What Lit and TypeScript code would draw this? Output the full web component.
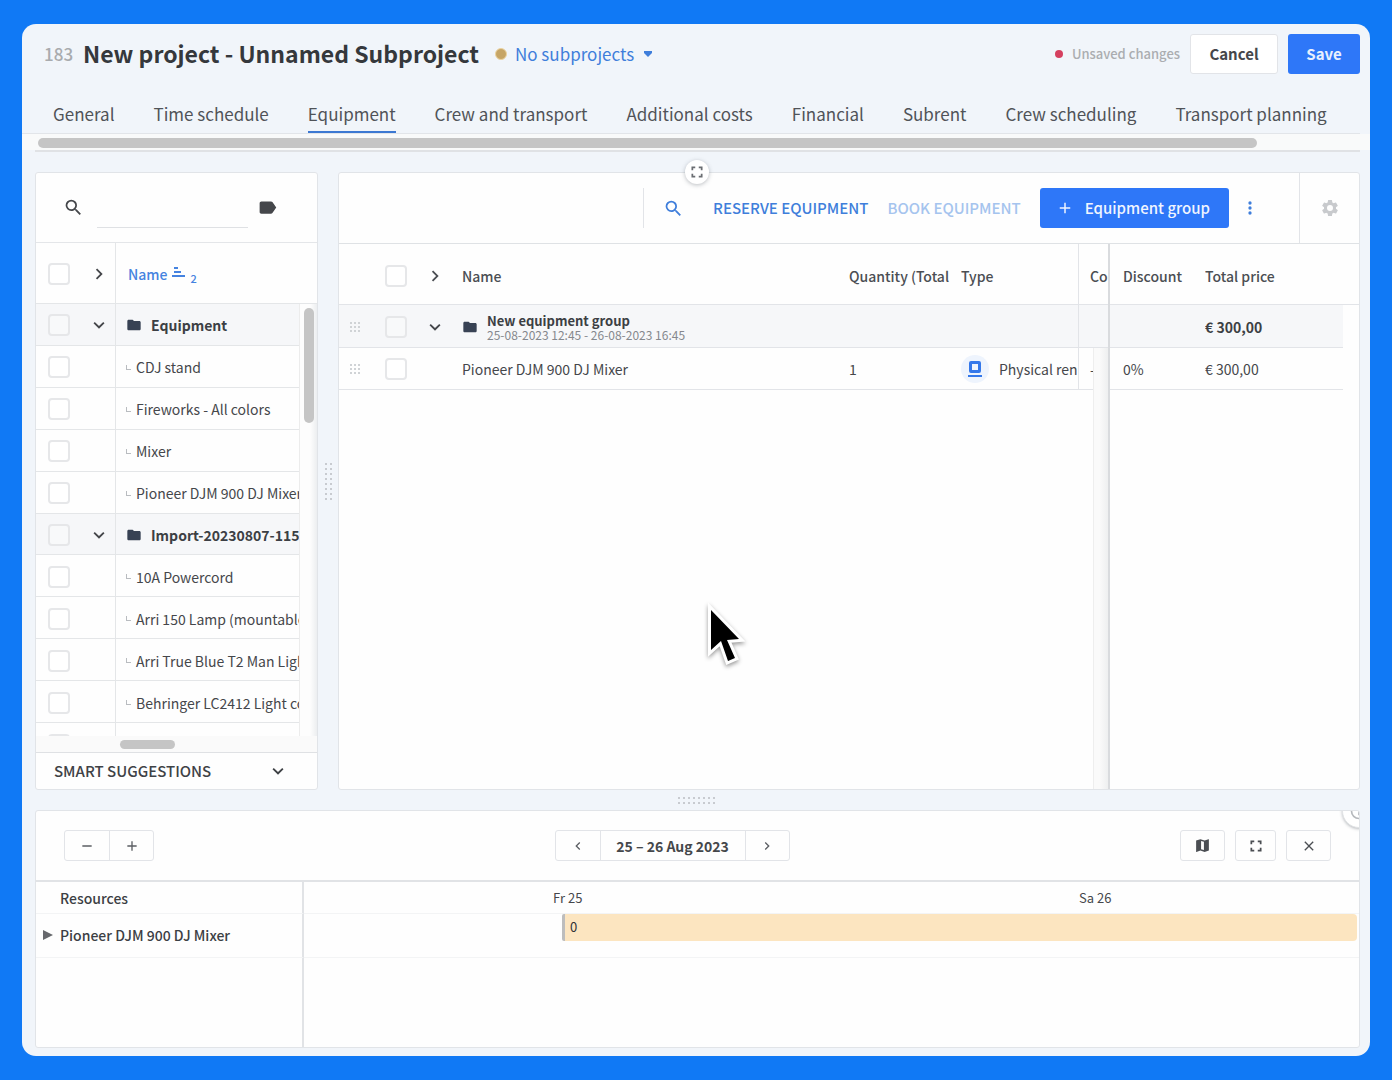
import { LitElement, html, css, svg, nothing } from "lit";
import { customElement, state } from "lit/decorators.js";
import { classMap } from "lit/directives/class-map.js";

interface ListRow {
  label: string;
  group?: boolean;
}

const TABS = [
  "General",
  "Time schedule",
  "Equipment",
  "Crew and transport",
  "Additional costs",
  "Financial",
  "Subrent",
  "Crew scheduling",
  "Transport planning",
];

const LIST: ListRow[] = [
  { label: "Equipment", group: true },
  { label: "CDJ stand" },
  { label: "Fireworks - All colors" },
  { label: "Mixer" },
  { label: "Pioneer DJM 900 DJ Mixer" },
  { label: "Import-20230807-115", group: true },
  { label: "10A Powercord" },
  { label: "Arri 150 Lamp (mountable" },
  { label: "Arri True Blue T2 Man Ligh" },
  { label: "Behringer LC2412 Light co" },
  { label: "" },
];

const icon = (size: number, body: unknown, box = 24) =>
  html`<svg width=${size} height=${size} viewBox="0 0 ${box} ${box}" fill="currentColor" aria-hidden="true">${body}</svg>`;

const SEARCH = svg`<path d="M15.5 14h-.79l-.28-.27A6.47 6.47 0 0 0 16 9.5 6.5 6.5 0 1 0 9.5 16c1.61 0 3.09-.59 4.23-1.57l.27.28v.79l5 4.99L20.49 19l-4.99-5zm-6 0C7.01 14 5 11.99 5 9.5S7.01 5 9.5 5 14 7.01 14 9.5 11.99 14 9.5 14z"/>`;
const TAG = svg`<path d="M17.63 5.84C17.27 5.33 16.67 5 16 5H5c-1.1 0-2 .9-2 2v10c0 1.1.9 2 2 2h11c.67 0 1.27-.33 1.63-.84L22 12l-4.37-6.16z"/>`;
const FOLDER = svg`<path d="M10 4H4c-1.1 0-2 .9-2 2v12c0 1.1.9 2 2 2h16c1.1 0 2-.9 2-2V8c0-1.1-.9-2-2-2h-8l-2-2z"/>`;
const RIGHT = svg`<path d="M8.6 16.6 13.2 12 8.6 7.4 10 6l6 6-6 6z"/>`;
const LEFT = svg`<path d="M15.4 7.4 10.8 12l4.6 4.6L14 18l-6-6 6-6z"/>`;
const DOWN = svg`<path d="M7.4 8.6 12 13.2l4.6-4.6L18 10l-6 6-6-6z"/>`;
const PLUS = svg`<path d="M19 13h-6v6h-2v-6H5v-2h6V5h2v6h6v2z"/>`;
const MINUS = svg`<path d="M19 13H5v-2h14v2z"/>`;
const DOTS = svg`<path d="M12 8a2 2 0 1 0 0-4 2 2 0 0 0 0 4zm0 2a2 2 0 1 0 0 4 2 2 0 0 0 0-4zm0 6a2 2 0 1 0 0 4 2 2 0 0 0 0-4z"/>`;
const GEAR = svg`<path d="M19.14 12.94c.04-.3.06-.61.06-.94 0-.32-.02-.64-.07-.94l2.03-1.58a.49.49 0 0 0 .12-.61l-1.92-3.32a.49.49 0 0 0-.59-.22l-2.39.96a7.03 7.03 0 0 0-1.62-.94l-.36-2.54a.48.48 0 0 0-.48-.41h-3.84a.48.48 0 0 0-.47.41l-.36 2.54c-.59.24-1.13.57-1.62.94l-2.39-.96a.49.49 0 0 0-.59.22L2.74 8.87a.48.48 0 0 0 .12.61l2.03 1.58c-.05.3-.09.63-.09.94s.02.64.07.94l-2.03 1.58a.49.49 0 0 0-.12.61l1.92 3.32c.12.22.37.29.59.22l2.39-.96c.5.38 1.03.7 1.62.94l.36 2.54c.05.24.24.41.48.41h3.84c.24 0 .44-.17.47-.41l.36-2.54c.59-.24 1.13-.56 1.62-.94l2.39.96c.22.08.47 0 .59-.22l1.92-3.32a.48.48 0 0 0-.12-.61l-2.01-1.58zM12 15.6A3.6 3.6 0 1 1 12 8.4a3.6 3.6 0 0 1 0 7.2z"/>`;
const MAP = svg`<path fill-rule="evenodd" d="M20.500 3 15 5 9 3 3 5v16l.5.200L9 19l6 2 6-2V3.200zM14 18.500l-4-1.300V5.500l4 1.300z"/>`;
const CLOSE = svg`<path d="M19 6.410 17.590 5 12 10.590 6.410 5 5 6.410 10.590 12 5 17.590 6.410 19 12 13.410 17.590 19 19 17.590 13.410 12z"/>`;
const FULL = svg`<path fill="none" stroke="currentColor" stroke-width="3" d="M4 9V4h5M15 4h5v5M20 15v5h-5M9 20H4v-5"/>`;
const RING = svg`<circle cx="12" cy="12" r="9" fill="none" stroke="currentColor" stroke-width="2"/><path d="M11 11h2v6h-2z"/>`;
const SORT = svg`<path d="M2 0h4v2H2zM2 4h7v2H2zM0 8h13v2H0z"/>`;

const grip = (cols: number, rows: number, step: number) => {
  const dots = [];
  for (let y = 0; y < rows; y++)
    for (let x = 0; x < cols; x++)
      dots.push(svg`<rect x=${x * step} y=${y * step} width="2" height="2"/>`);
  return html`<svg width=${(cols - 1) * step + 2} height=${(rows - 1) * step + 2} fill="currentColor" aria-hidden="true">${dots}</svg>`;
};

@customElement("app-root")
export class AppRoot extends LitElement {
  @state() private tab = "Equipment";

  static styles = css`
    :host {
      display: flex;
      box-sizing: border-box;
      height: 100vh;
      padding: 24px 22px;
      background: #1079f5;
      color: #45474b;
      font: 400 14px/20px "Noto Sans CJK SC", "Noto Sans", sans-serif;
    }
    *, *::before, *::after { box-sizing: border-box; }
    svg { display: block; flex: none; }
    button { font: inherit; color: inherit; background: none; border: 0; padding: 0; margin: 0; cursor: pointer; display: flex; align-items: center; justify-content: center; }
    input { font: inherit; margin: 0; padding: 0; }
    table { border-collapse: separate; border-spacing: 0; table-layout: fixed; width: 100%; }
    th, td { padding: 0; text-align: left; white-space: nowrap; overflow: hidden; font-weight: 400; }

    .window { flex: 1; min-width: 0; display: flex; flex-direction: column; background: #f1f5fa; border-radius: 14px; padding-bottom: 8px; overflow: hidden; }

    .header { display: flex; align-items: center; padding: 10px 10px 20px 22px; }
    .number { width: 39px; font-size: 17px; font-weight: 500; color: #a9abae; }
    .title { margin: 0; font-size: 23px; line-height: 38px; padding-bottom: 2px; font-weight: 700; color: #35383c; }
    .dot { border-radius: 50%; }
    .gold { width: 12px; height: 12px; margin: 0 8px 0 16px; background: #c6a566; border: 1px solid #ecd3a0; }
    .sub { gap: 9px; font-size: 17px; color: #3f7edb; }
    .status { display: flex; align-items: center; gap: 9px; margin-left: auto; margin-right: 10px; font-size: 13px; font-weight: 500; color: #abadb0; }
    .red { width: 8px; height: 8px; background: #d5405f; }
    .cancel, .save { height: 40px; font-size: 15px; font-weight: 700; border-radius: 3px; }
    .cancel { width: 88px; background: #fff; border: 1px solid #e2e4e8; margin-right: 10px; color: #45474b; }
    .save { width: 72px; background: #2e77f8; color: #e8f0fe; }

    .tabs { display: flex; gap: 39px; padding: 0 31px; margin: 0 10px 0 0; border-bottom: 1px solid #e2e5e9; white-space: nowrap; }
    .tab { padding: 8px 0 5px; font-size: 17px; line-height: 24px; color: #505358; border-bottom: 2px solid transparent; text-decoration: none; }
    .tab.on { border-color: #3c78d2; }
    .track { height: 16px; padding: 4px 7px 2px 16px; background: #f9fafa; }
    .thumb { background: #c5c5c5; border-radius: 5px; }
    .track .thumb { width: 92%; height: 10px; }
    .rule { height: 2px; margin: 0 10px 0 13px; background: #e0e2e5; }

    .main { flex: 1; min-height: 0; display: flex; padding: 20px 10px 0 13px; }
    .panel { background: #fefefe; border: 1px solid #e1e4e8; border-radius: 3px; }
    .side { width: 283px; display: flex; flex-direction: column; }
    .splitter { width: 20px; display: flex; align-items: center; justify-content: center; color: #c8cbd0; }
    .splitter.row { width: auto; height: 20px; }

    .filter { display: flex; align-items: center; height: 70px; padding: 0 39px 0 27px; border-bottom: 1px solid #e4e6e9; }
    .filter .field { flex: 1; min-width: 0; height: 40px; margin: 0 9px 0 13px; border: 0; border-bottom: 1px solid #dfe1e4; background: none; outline: none; }
    .scroller { flex: 1; min-height: 0; overflow: hidden; }
    .list { height: 522px; }
    .list thead th { height: 61px; }
    .list th, .list td { border-bottom: 1px solid #e4e6e8; padding-top: 2px; }
    .list .c1 { width: 52px; padding-left: 12px; }
    .list .c2 { width: 27px; }
    .list .c3 { border-left: 1px solid #e4e6e8; padding-left: 10px; }
    .list .gutter { width: 18px; padding: 4px; vertical-align: top; background: linear-gradient(90deg, #fdfdfd 60%, #eceef0); border: 0; border-left: 1px solid #ececec; }
    .list .gap { width: 18px; }
    .gutter .thumb { width: 10px; height: 115px; }
    .shade { background: #f6f7f9; }
    .line { display: flex; align-items: center; }
    .sort { font-weight: 500; color: #4583e0; gap: 5px; padding-left: 2px; }
    .level { font-size: 11px; align-self: flex-end; line-height: 12px; }
    .folder { color: #384254; margin-right: 9px; }
    .strong { font-weight: 700; color: #3c3f44; }
    .branch { flex: none; width: 5px; height: 5px; margin-right: 5px; border: solid #b9bcc0; border-width: 0 0 1px 1px; }
    .hbar { height: 16px; padding: 4px 0 0 84px; background: #fafafa; }
    .hbar .thumb { width: 55px; height: 9px; }
    .smart { justify-content: space-between; height: 37px; padding: 0 28px 0 18px; border-top: 1px solid #dfe1e4; font-size: 15px; font-weight: 500; color: #3f4246; }
    .check { appearance: none; display: block; width: 22px; height: 22px; background: #fff; border: 2px solid #e6e7e9; border-radius: 4px; }
    .shade .check { background: #f8f9fa; }

    .work { flex: 1; min-width: 0; position: relative; display: flex; flex-direction: column; }
    .round { position: absolute; left: 346px; top: -13px; width: 24px; height: 24px; border-radius: 50%; background: #fff; box-shadow: 0 1px 4px rgba(60, 70, 80, 0.35); color: #6b6e73; }
    .bar { display: flex; align-items: center; justify-content: flex-end; height: 71px; border-bottom: 1px solid #dfe2e5; font-size: 15px; font-weight: 500; }
    .find { height: 40px; padding: 0 29px 0 19px; border-left: 1px solid #e2e4e8; color: #3f7edb; }
    .action { color: #3f7edb; margin-right: 19px; }
    .action:disabled { color: #a5c4ee; }
    .primary { height: 40px; gap: 11px; padding: 0 19px 0 16px; border-radius: 3px; background: #2e77f8; color: #f0f5ff; }
    .more { padding: 0 39px 0 11px; color: #3f7edb; }
    .gear { width: 60px; height: 70px; border-left: 1px solid #e2e4e8; color: #c8cacd; }
    .panes { flex: 1; min-height: 0; display: flex; }
    .pane { display: flex; flex-direction: column; }
    .wide { flex: 1; min-width: 0; border-right: 2px solid #d9dbde; }
    .fixed { width: 249px; }
    .grid thead th { height: 61px; padding-top: 3px; font-weight: 500; color: #4b4e53; }
    .grid .group td { height: 43px; padding-top: 2px; }
    .grid .item td { height: 42px; }
    .grid th, .grid .group td, .grid .item td { border-bottom: 1px solid #e2e4e8; }
    .grid .drag { padding-left: 11px; color: #d0d3d6; }
    .w-drag { width: 46px; }
    .w-tick { width: 39px; }
    .w-fold { width: 38px; }
    .w-qty { width: 112px; }
    .w-type { width: 117px; }
    .w-coe { width: 15px; }
    .w-rail { width: 15px; }
    .grid .coe { border-left: 1px solid #e2e4e8; padding-left: 11px; }
    .rail { background: linear-gradient(90deg, #fafafa 40%, #eeeff0); border-left: 1px solid #eeeeee; }
    .grid .item .rail { border-bottom: 0; }
    .rest { flex: 1; display: flex; justify-content: flex-end; }
    .rest .rail { width: 15px; }
    .names { line-height: 15px; font-size: 13px; }
    .dates { font-size: 12px; line-height: 14px; color: #85888d; }
    .badge { flex: none; display: flex; align-items: center; justify-content: center; width: 28px; height: 28px; margin-right: 10px; border-radius: 50%; background: #eef4fd; color: #3478ea; }
    .fixed .disc { width: 95px; padding-left: 13px; }
    .fixed .end { width: 16px; }
    .grid .group .end, .grid .item .end { border: 0; }

    .plan { margin: 0 10px 0 13px; position: relative; overflow: hidden; }
    .corner { position: absolute; right: -17px; top: -17px; width: 34px; height: 34px; border-radius: 50%; background: #fff; border: 1px solid #e2e4e6; box-shadow: 0 1px 3px rgba(60, 70, 80, 0.35); color: #b5b8bc; }
    .tools { display: flex; justify-content: space-between; align-items: center; height: 71px; padding: 0 28px; border-bottom: 2px solid #e1e3e6; }
    .set { display: flex; border: 1px solid #e2e4e8; border-radius: 3px; }
    .dateset { margin-left: 10px; }
    .set button { width: 44px; height: 29px; color: #5b5e63; }
    .set button + button { border-left: 1px solid #e2e4e8; }
    .set .range { width: 145px; font-weight: 700; color: #45474b; }
    .right { display: flex; gap: 10px; }
    .right button { width: 45px; height: 31px; border: 1px solid #e2e4e8; border-radius: 3px; color: #4b4e53; }
    .right .mid { width: 41px; }
    .time th, .time td { border-bottom: 1px solid #f3f4f5; }
    .time thead th { height: 32px; font-size: 13px; text-align: center; }
    .time thead .res, .time .res { width: 268px; padding-left: 24px; border-right: 2px solid #e1e3e6; text-align: left; font-size: 14px; font-weight: 500; color: #3c3f44; }
    .time .row .res { padding: 0 0 2px 7px; }
    .time .row td { height: 44px; vertical-align: top; padding-right: 2px; }
    .time .blank td { height: 89px; border-bottom: 0; }
    .tri { margin-right: 7px; color: #67696d; }
    .booking { height: 27px; padding: 3px 0 0 5px; border-left: 3px solid #bdbdbd; border-radius: 2px 4px 4px 2px; background: #fce5c0; font-size: 13px; color: #303236; }

    .pointer { position: absolute; left: 704px; top: 601px; filter: drop-shadow(0 2px 2px rgba(0, 0, 0, 0.4)); }
  `;

  private check(name: string) {
    return html`<input class="check" type="checkbox" aria-label=${"Select " + name} />`;
  }

  private listRow(row: ListRow, first: boolean) {
    return html`<tr class=${classMap({ shade: !!row.group })}>
      <td class="c1">${this.check(row.label)}</td>
      <td class="c2">${row.group ? html`<button aria-label="Collapse">${icon(22, DOWN)}</button>` : nothing}</td>
      <td class="c3">
        <div class="line">
          ${row.group
            ? html`<span class="folder">${icon(16, FOLDER)}</span><span class="strong">${row.label}</span>`
            : row.label
              ? html`<span class="branch"></span>${row.label}`
              : nothing}
        </div>
      </td>
      ${first ? html`<td class="gutter" rowspan=${LIST.length}><div class="thumb"></div></td>` : nothing}
    </tr>`;
  }

  render() {
    return html`
      <div class="window">
        <header class="header">
          <span class="number">183</span>
          <h1 class="title">New project - Unnamed Subproject</h1>
          <span class="dot gold"></span>
          <button class="sub">No subprojects
            <svg width="10" height="6" viewBox="0 0 10 6" fill="currentColor"><path d="M1 0h8v2L5 6 1 2z"/></svg>
          </button>
          <span class="status"><span class="dot red"></span>Unsaved changes</span>
          <button class="cancel">Cancel</button>
          <button class="save">Save</button>
        </header>
        <nav class="tabs">
          ${TABS.map(
            (t) => html`<a href="#" class=${classMap({ tab: true, on: t === this.tab })}
              @click=${(e: Event) => { e.preventDefault(); this.tab = t; }}>${t}</a>`
          )}
        </nav>
        <div class="track"><div class="thumb"></div></div>
        <div class="rule"></div>

        <div class="main">
          <section class="panel side">
            <div class="filter">
              ${icon(21, SEARCH)}
              <input class="field" type="text" aria-label="Search equipment" />
              <button aria-label="Tags">${icon(21, TAG)}</button>
            </div>
            <div class="scroller">
              <table class="list">
                <thead>
                  <tr>
                    <th class="c1">${this.check("all")}</th>
                    <th class="c2"><button aria-label="Expand all">${icon(22, RIGHT)}</button></th>
                    <th class="c3"><button class="sort">Name
                      <svg width="13" height="14" viewBox="0 0 13 14" fill="currentColor">${SORT}</svg>
                      <span class="level">2</span></button></th>
                    <th class="gap"></th>
                  </tr>
                </thead>
                <tbody>${LIST.map((r, i) => this.listRow(r, i === 0))}</tbody>
              </table>
            </div>
            <div class="hbar"><div class="thumb"></div></div>
            <button class="smart">SMART SUGGESTIONS ${icon(22, DOWN)}</button>
          </section>

          <div class="splitter">${grip(2, 8, 5)}</div>

          <section class="panel work">
            <button class="round" aria-label="Full screen">${icon(14, FULL)}</button>
            <div class="bar">
              <button class="find" aria-label="Search">${icon(21, SEARCH)}</button>
              <button class="action">RESERVE EQUIPMENT</button>
              <button class="action" disabled>BOOK EQUIPMENT</button>
              <button class="primary">${icon(18, PLUS)}Equipment group</button>
              <button class="more" aria-label="More">${icon(20, DOTS)}</button>
              <button class="gear" aria-label="Settings">${icon(20, GEAR)}</button>
            </div>
            <div class="panes">
              <div class="pane wide">
                <table class="grid">
                  <colgroup>
                    <col class="w-drag" /><col class="w-tick" /><col class="w-fold" /><col />
                    <col class="w-qty" /><col class="w-type" /><col class="w-coe" /><col class="w-rail" />
                  </colgroup>
                  <thead>
                    <tr>
                      <th class="drag"></th>
                      <th>${this.check("all rows")}</th>
                      <th><button aria-label="Expand all">${icon(22, RIGHT)}</button></th>
                      <th>Name</th>
                      <th>Quantity (Total</th>
                      <th>Type</th>
                      <th class="coe" colspan="2">Coe</th>
                    </tr>
                  </thead>
                  <tbody>
                    <tr class="group shade">
                      <td class="drag">${grip(3, 3, 4)}</td>
                      <td>${this.check("New equipment group")}</td>
                      <td><button aria-label="Collapse">${icon(22, DOWN)}</button></td>
                      <td>
                        <div class="line">
                          <span class="folder">${icon(16, FOLDER)}</span>
                          <div class="names">
                            <div class="strong">New equipment group</div>
                            <div class="dates">25-08-2023 12:45 - 26-08-2023 16:45</div>
                          </div>
                        </div>
                      </td>
                      <td></td>
                      <td></td>
                      <td class="coe" colspan="2"></td>
                    </tr>
                    <tr class="item">
                      <td class="drag">${grip(3, 3, 4)}</td>
                      <td>${this.check("Pioneer DJM 900 DJ Mixer")}</td>
                      <td></td>
                      <td>Pioneer DJM 900 DJ Mixer</td>
                      <td>1</td>
                      <td>
                        <div class="line">
                          <span class="badge">
                            <svg width="16" height="18" viewBox="0 0 16 18" fill="currentColor"><path fill-rule="evenodd" d="M4 1h8a2 2 0 0 1 2 2v8a2 2 0 0 1-2 2H4a2 2 0 0 1-2-2V3a2 2 0 0 1 2-2zm1 3v6h6V4z"/><path d="M1 15h14v2H1z"/></svg>
                          </span>
                          Physical ren
                        </div>
                      </td>
                      <td class="coe">-</td>
                      <td class="rail"></td>
                    </tr>
                  </tbody>
                </table>
                <div class="rest"><div class="rail"></div></div>
              </div>
              <div class="pane fixed">
                <table class="grid">
                  <thead>
                    <tr><th class="disc">Discount</th><th>Total price</th><th class="end"></th></tr>
                  </thead>
                  <tbody>
                    <tr class="group">
                      <td class="shade"></td><td class="shade strong">€ 300,00</td><td class="end"></td>
                    </tr>
                    <tr class="item">
                      <td class="disc">0%</td><td>€ 300,00</td><td class="end"></td>
                    </tr>
                  </tbody>
                </table>
              </div>
            </div>
          </section>
        </div>

        <div class="splitter row">${grip(8, 2, 5)}</div>

        <section class="panel plan">
          <button class="corner" aria-label="Panel options">${icon(20, RING)}</button>
          <div class="tools">
            <div class="set">
              <button aria-label="Zoom out">${icon(16, MINUS)}</button>
              <button aria-label="Zoom in">${icon(16, PLUS)}</button>
            </div>
            <div class="set dateset">
              <button aria-label="Previous">${icon(16, LEFT)}</button>
              <button class="range">25 – 26 Aug 2023</button>
              <button aria-label="Next">${icon(16, RIGHT)}</button>
            </div>
            <div class="right">
              <button aria-label="Map">${icon(17, MAP)}</button>
              <button class="mid" aria-label="Full screen">${icon(14, FULL)}</button>
              <button aria-label="Close">${icon(16, CLOSE)}</button>
            </div>
          </div>
          <table class="time">
            <thead>
              <tr><th class="res">Resources</th><th>Fr 25</th><th>Sa 26</th></tr>
            </thead>
            <tbody>
              <tr class="row">
                <th class="res">
                  <div class="line">
                    <svg class="tri" width="10" height="10" viewBox="0 0 10 10" fill="currentColor"><path d="M0 0l10 5-10 5z"/></svg>
                    Pioneer DJM 900 DJ Mixer
                  </div>
                </th>
                <td colspan="2"><div class="booking" style="margin-left:24.5%">0</div></td>
              </tr>
              <tr class="blank"><td class="res"></td><td colspan="2"></td></tr>
            </tbody>
          </table>
        </section>
      </div>

      <svg class="pointer" width="48" height="72" viewBox="0 0 48 72" aria-hidden="true">
        <path d="M7 9v40l10-9 7 20 7-3-8-18 12-1z" fill="#000" stroke="#fff" stroke-width="6" paint-order="stroke"/>
      </svg>
    `;
  }
}
